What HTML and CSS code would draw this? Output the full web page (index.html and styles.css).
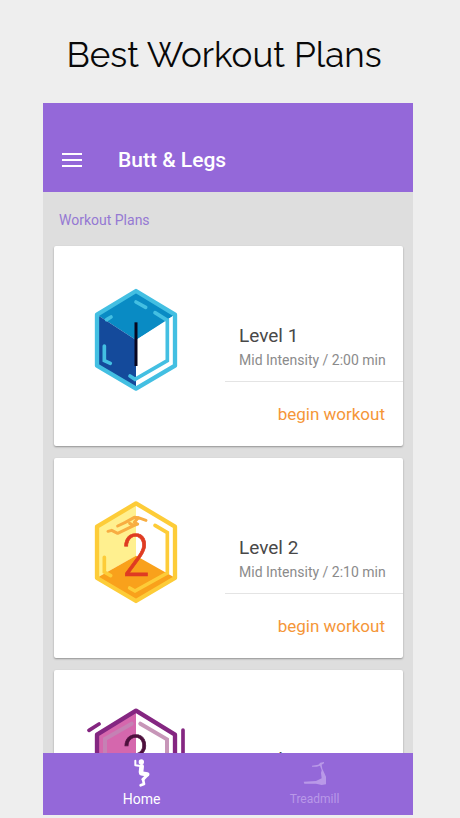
FILE: index.html
```html
<!DOCTYPE html>
<html lang="en">
<head>
  <meta charset="UTF-8">
  <meta name="viewport" content="width=device-width, initial-scale=1.0">
  <title>Best Workout Plans</title>
  <link rel="stylesheet" href="styles.css">
</head>
<body>
  <h1 class="page-title">Best Workout Plans</h1>

  <div class="app">
    <header class="app-bar">
      <button class="menu-btn" type="button" aria-label="Open menu">
        <svg width="20" height="16" viewBox="0 0 20 16" fill="#fff">
          <rect y="1" width="20" height="2"/>
          <rect y="7" width="20" height="2"/>
          <rect y="13" width="20" height="2"/>
        </svg>
      </button>
      <h2 class="app-title">Butt &amp; Legs</h2>
    </header>

    <main class="plans">
      <h3 class="section-title">Workout Plans</h3>

      <article class="card">
        <div class="badge">
          <svg width="100" height="120" viewBox="0 -3 300 360" fill="none" stroke-linecap="round">
            <path d="M153 33L270 104L153 180L36 104Z" fill="#098bc4"/>
            <path d="M36 104L153 180V326L36 260Z" fill="#144a9b"/>
            <path d="M153 180L244 124V238L153 294Z" fill="#fff"/>
            <path d="M244 121L270 104V257L244 272Z" fill="#fff"/>
            <path d="M153 33L270 104V257L153 326L36 257V104Z" stroke="#43bfe2" stroke-width="13" stroke-linejoin="round"/>
            <g stroke="#43bfe2" stroke-width="11">
              <path d="M153 66L182 82M65 119L78 111M58 198V242L76 250"/>
              <path d="M210 98L247 121V242L150 298L135 288"/>
            </g>
            <path d="M153 127V258" stroke="#08061f" stroke-width="9" stroke-linecap="butt"/>
          </svg>
        </div>
        <div class="info">
          <div class="details">
            <h4 class="level">Level 1</h4>
            <p class="meta">Mid Intensity / 2:00 min</p>
          </div>
          <div class="actions"><button class="begin-btn" type="button">begin workout</button></div>
        </div>
      </article>

      <article class="card">
        <div class="badge">
          <svg width="100" height="120" viewBox="0 0 300 360" fill="none" stroke-linecap="round">
            <path d="M153 37L36 107V260L153 194Z" fill="#fff08f"/>
            <path d="M153 194L270 260L153 330L36 260Z" fill="#f9a11b"/>
            <path d="M153 37L270 107V261L153 330L36 261V107Z" stroke="#fdcc38" stroke-width="13" stroke-linejoin="round"/>
            <g stroke="#fdcc38" stroke-width="11">
              <path d="M58 199V243L77 254"/>
              <path d="M210 103L247 125V246L150 300L134 291"/>
            </g>
            <path d="M69 121L80 118L98 127L146 104L134 97M98 105L121 94M121 94L148 79L160 80L148 94L158 99L146 104M160 80L183 88" stroke="#f8ad42" stroke-width="9" stroke-linejoin="round"/>
            <text class="badge-number" x="152" y="255" fill="#df3b22" stroke="#df3b22">2</text>
          </svg>
        </div>
        <div class="info">
          <div class="details">
            <h4 class="level">Level 2</h4>
            <p class="meta">Mid Intensity / 2:10 min</p>
          </div>
          <div class="actions"><button class="begin-btn" type="button">begin workout</button></div>
        </div>
      </article>

      <article class="card">
        <div class="badge">
          <svg width="100" height="120" viewBox="0 0 300 360" fill="none" stroke-linecap="round">
            <path d="M153 23L36 95V248L153 318Z" fill="#d567ad"/>
            <path d="M153 23L270 95V248L153 318L36 248V95Z" stroke="#842681" stroke-width="13" stroke-linejoin="round"/>
            <path d="M140 62L60 108V234L153 288" stroke="#c581b4" stroke-width="12"/>
            <path d="M166 62L246 109V234L153 288" stroke="#c796b8" stroke-width="12"/>
            <path d="M12 82L42 63M294 81V160" stroke="#842681" stroke-width="11"/>
            <text class="badge-number" x="152" y="223" fill="#4d103d" stroke="#4d103d">3</text>
          </svg>
        </div>
        <div class="info">
          <div class="details">
            <h4 class="level">Level 3</h4>
            <p class="meta">Mid Intensity / 2:20 min</p>
          </div>
          <div class="actions"><button class="begin-btn" type="button">begin workout</button></div>
        </div>
      </article>
    </main>

    <nav class="bottom-nav">
      <a class="nav-item active" href="#home">
        <svg width="28" height="28" viewBox="0 0 84 84" fill="none" stroke="currentColor" stroke-linecap="round" stroke-linejoin="round">
          <circle cx="40" cy="9" r="8" fill="currentColor" stroke="none"/>
          <path d="M38 21L22 19V5" stroke-width="6"/>
          <path d="M41 22L39 40" stroke-width="14"/>
          <path d="M40 43L58 46" stroke-width="13"/>
          <path d="M58 48L45 61" stroke-width="9"/>
          <path d="M45 61L48 75L38 79" stroke-width="8"/>
        </svg>
        Home
      </a>
      <a class="nav-item" href="#treadmill">
        <svg width="28" height="28" viewBox="0 0 84 84" fill="currentColor">
          <path d="M33 20L52 17L58 11L69 9V13L62 17L64 29L75 53V76L62 78L45 74L10 74L8 68L45 66L62 58L60 42L62 34L57 20L47 23L33 23Z"/>
        </svg>
        Treadmill
      </a>
    </nav>
  </div>
</body>
</html>
```
FILE: styles.css
```css
* {
  box-sizing: border-box;
}

body {
  margin: 0;
  height: 100vh;
  padding: 0 47px 3px 43px;
  display: flex;
  flex-direction: column;
  background-color: #eeeeee;
  font-family: Roboto, Arial, sans-serif;
}

h1, h2, h3, h4, p {
  margin: 0;
  font-weight: 400;
}

button {
  padding: 0;
  border: none;
  background: none;
  font-family: inherit;
  cursor: pointer;
}

.page-title {
  padding: 33px 8px 26px 0;
  font-family: Raleway, Lato, sans-serif;
  font-size: 35px;
  font-weight: 400;
  line-height: 44px;
  text-align: center;
  white-space: nowrap;
  color: #080808;
}

.app {
  flex: 1;
  min-height: 0;
  display: flex;
  flex-direction: column;
  background-color: #dedede;
}

.app-bar {
  display: flex;
  align-items: center;
  gap: 36px;
  padding: 37px 19px 12px;
  background-color: #9468d9;
}

.menu-btn {
  display: flex;
  align-items: center;
  height: 40px;
}

.app-title {
  font-size: 21px;
  font-weight: 500;
  color: #fff;
}

/* plan list */
.plans {
  flex: 1;
  min-height: 0;
  overflow: hidden;
  padding: 0 10px 0 11px;
}

.section-title {
  padding: 16px 5px 14px;
  font-size: 14px;
  line-height: 24px;
  color: #9579d3;
}

.card {
  display: flex;
  margin-bottom: 12px;
  background-color: #fff;
  border-radius: 2px;
  box-shadow: 0 1px 2px rgba(0, 0, 0, 0.35);
}

.badge {
  flex: 0 0 49%;
  padding: 33px 0 0 31px;
}

.badge svg {
  display: block;
}

.badge-number {
  font-family: "Roboto Condensed", "Liberation Sans Narrow", Roboto, sans-serif;
  font-size: 176px;
  font-weight: 300;
  text-anchor: middle;
  stroke-width: 2px;
}

.info {
  flex: 1;
  white-space: nowrap;
}

.details {
  padding: 78px 0 9px 14px;
  border-bottom: 1px solid #e4e4e4;
}

.level {
  font-size: 19px;
  line-height: 24px;
  color: #484848;
}

.meta {
  font-size: 14px;
  line-height: 24px;
  color: #8b8b8b;
}

.actions {
  display: flex;
  justify-content: flex-end;
  padding: 20px 18px;
}

.begin-btn {
  font-size: 17px;
  line-height: 24px;
  color: #f59638;
}

/* bottom navigation */
.bottom-nav {
  display: flex;
  padding: 6px 12px;
  background-color: #9468d9;
}

.nav-item {
  flex: 1;
  display: flex;
  flex-direction: column;
  align-items: center;
  gap: 2px;
  font-size: 12px;
  line-height: 20px;
  color: #b999e8;
  text-decoration: none;
}

.nav-item.active {
  font-size: 14px;
  color: #fff;
}
```
